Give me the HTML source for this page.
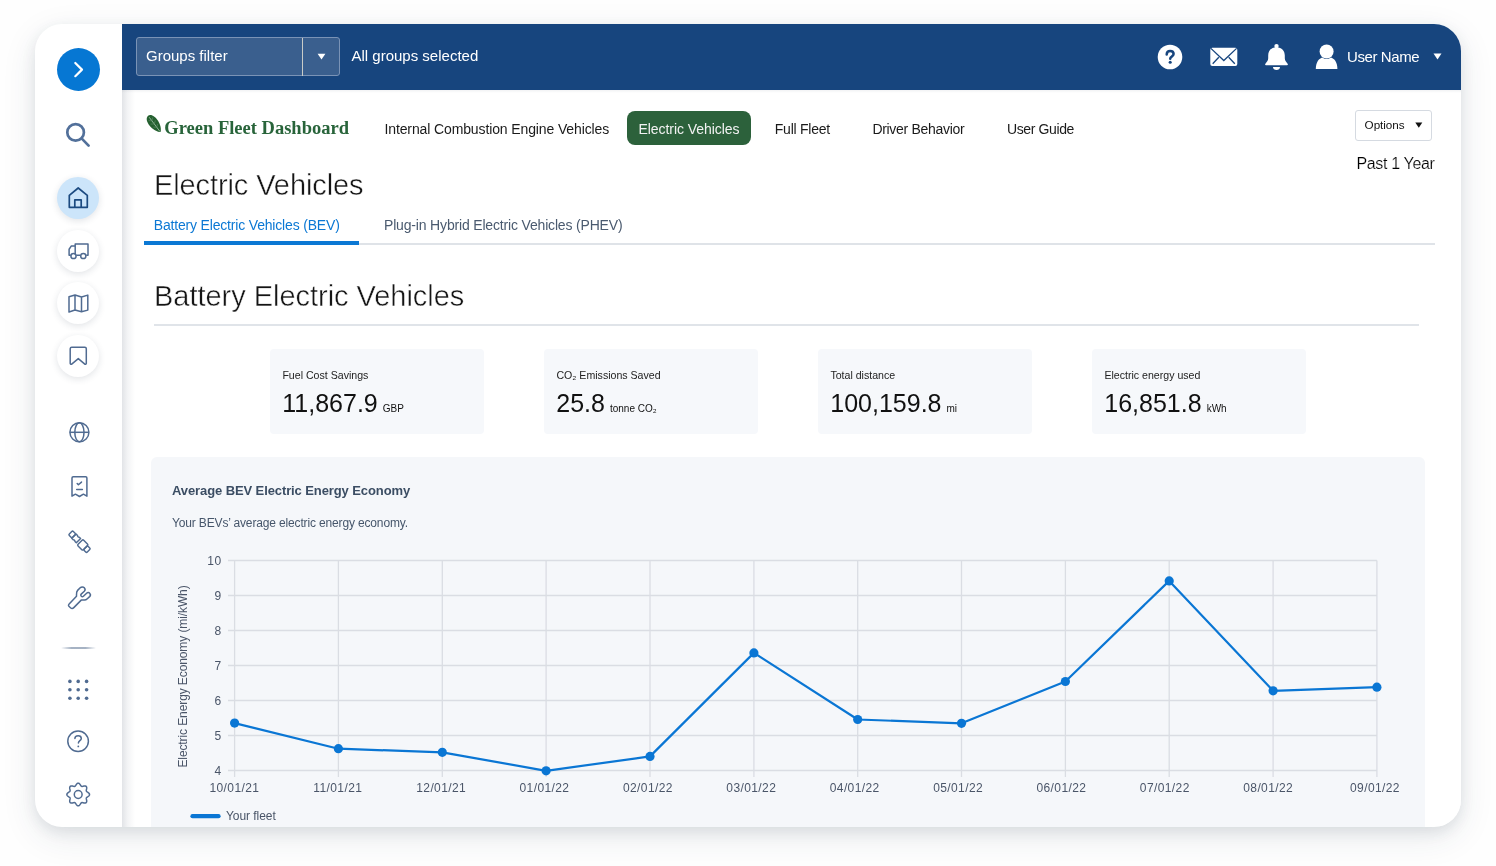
<!DOCTYPE html>
<html><head><meta charset="utf-8">
<style>
*{margin:0;padding:0;box-sizing:border-box}
html,body{width:1496px;height:866px;overflow:hidden;background:#fefefe;font-family:"Liberation Sans",sans-serif}
.a{position:absolute}
#card{position:absolute;left:35px;top:24px;width:1426px;height:803px;border-radius:27px;background:#fff;box-shadow:0 5px 14px rgba(40,55,75,.10),0 10px 34px rgba(40,55,75,.10);overflow:hidden}
#in{position:absolute;left:-35px;top:-24px;width:1496px;height:866px;will-change:transform}
.t{position:absolute;white-space:nowrap;line-height:1}
.sc{position:absolute;left:57px;width:42px;height:42px;border-radius:50%;background:#fff;box-shadow:0 2px 7px rgba(30,45,70,.13)}
svg{position:absolute;left:0;top:0;overflow:visible}
.kpi{position:absolute;top:349px;width:214px;height:85px;border-radius:4px;background:#f6f8fb}
.kl{position:absolute;left:12.4px;top:21px;font-size:10.6px;color:#222;white-space:nowrap;line-height:1}
.kv{position:absolute;left:12.3px;top:41.6px;font-size:25px;color:#111;white-space:nowrap;line-height:1}
.ku{font-size:10px;margin-left:5px}
.lt{-webkit-text-stroke:0.45px #fff}
.lt2{-webkit-text-stroke:0.2px #fff}
.nav{position:absolute;top:121.5px;font-size:14px;color:#1a1a1a;white-space:nowrap;line-height:1}
</style></head><body>
<div id="card"><div id="in">
  <!-- main area -->
  <div class="a" style="left:122px;top:24px;width:1339px;height:802px;background:#fff"></div>
  <div class="a" style="left:122px;top:90px;width:13px;height:737px;background:linear-gradient(90deg,rgba(30,45,70,.13),rgba(30,45,70,.05) 45%,rgba(30,45,70,0))"></div>
  <div class="a" style="left:122px;top:90px;width:1339px;height:3px;background:linear-gradient(180deg,rgba(30,45,70,.06),rgba(30,45,70,0))"></div>
  <!-- header -->
  <div class="a" style="left:122px;top:24px;width:1339px;height:66px;background:#17457e"></div>
  <div class="a" style="left:136px;top:37px;width:204px;height:39px;border:1px solid #7a93b6;border-radius:3px;background:#3a5f8e"></div>
  <div class="a" style="left:302px;top:37.5px;width:1.4px;height:38px;background:#c9ccc8"></div>
  <div class="t" style="left:146px;top:48.3px;font-size:15px;color:#fff">Groups filter</div>
  <div class="t" style="left:351.5px;top:48.3px;font-size:15px;color:#fff">All groups selected</div>
  <div class="t" style="left:1347px;top:48.9px;font-size:15px;letter-spacing:-0.4px;color:#fff">User Name</div>

  <!-- sidebar buttons -->
  <div class="a" style="left:56.5px;top:48px;width:43px;height:43px;border-radius:50%;background:#0677d3"></div>
  <div class="sc" style="top:177px;background:#cce5fa"></div>
  <div class="sc" style="top:230px"></div>
  <div class="sc" style="top:282px"></div>
  <div class="sc" style="top:335px"></div>

  <svg width="1496" height="866">
    <!-- header icons -->
    <path d="M317.6 53.8h7.8l-3.9 5.6z" fill="#fff"/>
    <path d="M1433.5 53.5h8l-4 6z" fill="#fff"/>
    <circle cx="1170" cy="57" r="12.3" fill="#fff"/>
    <path d="M1166.7 54.4C1166.7 52.3 1168.1 50.9 1170.1 50.9C1172.2 50.9 1173.6 52.2 1173.6 54C1173.6 56.3 1170.2 56.5 1170.2 58.7" stroke="#17457e" stroke-width="2.5" fill="none" stroke-linecap="round"/><circle cx="1170.2" cy="62.3" r="1.55" fill="#17457e"/>
    <rect x="1210.3" y="47.8" width="27" height="18.3" rx="2" fill="#fff"/>
    <path d="M1210.9 48.4L1223.8 60.5L1236.6 48.4M1212.7 63.8L1218.8 57.3M1234.8 63.8L1228.7 57.3" stroke="#17457e" stroke-width="1.3" fill="none"/>
    <path d="M1276.5 47.2C1271 47.2 1268.2 51 1268.2 55.5V58.3C1268.2 60.7 1266.6 62.3 1265.4 63.7C1264.8 64.4 1265.1 65.3 1266 65.3H1287C1287.9 65.3 1288.2 64.4 1287.6 63.7C1286.4 62.3 1284.8 60.7 1284.8 58.3V55.5C1284.8 51 1282 47.2 1276.5 47.2Z" fill="#fff"/><circle cx="1276.5" cy="46.1" r="2.2" fill="#fff"/>
    <path d="M1273 66.9H1280C1280 68.7 1278.5 70 1276.5 70C1274.5 70 1273 68.7 1273 66.9Z" fill="#fff"/>
    <circle cx="1326.6" cy="51.5" r="7" fill="#fff"/>
    <path d="M1315.8 68.9c0-7 3.5-10.6 6.5-11.4c1.4 1 2.8 1.5 4.3 1.5s2.9-.5 4.3-1.5c3 .8 6.5 4.4 6.5 11.4z" fill="#fff"/>

    <!-- options triangle -->
    <path d="M1415.3 122.6h7l-3.5 5.2z" fill="#111"/>

    <!-- leaf logo -->
    <g transform="translate(154.3 124) rotate(-37)">
      <path d="M0 -10.4C6.6 -9.6 6.4 5 0.2 10.2C-6.2 5 -6.6 -9.6 0 -10.4Z" fill="#24602f"/>
      <path d="M0 -8.5V9.5" stroke="#9dbfa3" stroke-width=".8" fill="none"/>
      <path d="M0 -4L-2.6 -6.2M0 0L-3 -2.2M0 4L-2.6 2M0 -4L2.6 -6.2M0 0L3 -2.2M0 4L2.6 2" stroke="#5d8a66" stroke-width=".6" fill="none"/>
    </g>

    <!-- sidebar icons -->
    <g fill="none" stroke="#0677d3" stroke-width="0"></g>
    <path d="M75.3 63L82 69.6L75.3 76.2" stroke="#fff" stroke-width="2.2" stroke-linecap="round" stroke-linejoin="round" fill="none"/>
    <g fill="none" stroke="#52709a" stroke-width="2.7" stroke-linecap="round">
      <circle cx="75.6" cy="132.4" r="8.3"/>
      <path d="M81.8 138.6L88.6 145.6"/>
    </g>
    <g fill="none" stroke="#1b4a80" stroke-width="1.7" stroke-linejoin="round">
      <path d="M69.3 207.3V195.4L78.2 188L87.3 195.4V207.3Z"/>
      <path d="M74.8 207.3V199.8H81.2V207.3"/>
    </g>
    <g fill="none" stroke="#506b91" stroke-width="1.5" stroke-linejoin="round">
      <path d="M75.2 254.5V244H88V255.3H86.2M80.5 255.3H76.3M70.8 255.3H69.1V249.2L71.4 245.9H75.2"/>
      <circle cx="73.5" cy="256" r="2.6"/>
      <circle cx="83.3" cy="256" r="2.6"/>
      <path d="M69 296.8L75 295L81.5 297L87.8 295.1V310.1L81.5 311.8L75 310L69 312Z M75 295V310 M81.5 297V311.8"/>
      <path d="M70.2 348.8a1.5 1.5 0 0 1 1.5 -1.5H84.8a1.5 1.5 0 0 1 1.5 1.5V363.5a.9 .9 0 0 1 -1.5 .6L78.3 358.6L71.7 364.1a.9 .9 0 0 1 -1.5 -.6Z"/>
      <!-- globe -->
      <circle cx="79.4" cy="432.3" r="9.5"/>
      <ellipse cx="79.4" cy="432.3" rx="4.6" ry="9.5"/>
      <path d="M69.9 432.3H88.9"/>
      <!-- receipt -->
      <path d="M72 496.2V478a1.2 1.2 0 0 1 1.2 -1.2H85.7a1.2 1.2 0 0 1 1.2 1.2V496.2L83.4 494.2L79.5 496.5L75.4 494.2Z"/>
      <path d="M77.2 483.5L78.4 484.8L81.5 482.1M76.7 489.6H82.4" stroke-linecap="round"/>
      <!-- wrench -->
      <path d="M68.9 604.3L76.5 596.3C76.6 594.5 76 592 77.6 590.4L80.2 587.7C81.3 586.6 83.3 586.6 84.3 587.7C85.2 588.7 85.2 590.3 84.3 591.3L81.2 594.1C80.6 594.7 80.7 595.7 81.3 596.2C81.9 596.8 82.8 596.8 83.4 596.2L86.6 593.2C87.6 592.3 89 592.4 89.8 593.4C90.6 594.3 90.5 595.7 89.6 596.6L87.3 598.8C86.4 599.7 85.5 600.2 84.2 600.1H81.2L73.8 607.6C72.8 608.6 71.5 608.6 70.5 607.7L68.9 606.2C68.4 605.6 68.4 604.8 68.9 604.3Z"/>
      <!-- help -->
      <circle cx="78.1" cy="741.3" r="10.3"/>
      <path d="M74.9 738.6C74.9 736.8 76.3 735.7 78.1 735.7C79.9 735.7 81.3 736.8 81.3 738.4C81.3 740.6 78.4 740.8 78.4 743" stroke-linecap="round"/>
      <!-- gear -->
      <circle cx="78.2" cy="794.5" r="3.9"/>
      <path d="M78.20 783.15 L78.64 783.22 L79.07 783.42 L79.47 783.74 L79.84 784.14 L80.17 784.59 L80.47 785.05 L80.74 785.49 L81.01 785.86 L81.28 786.14 L81.59 786.32 L81.93 786.41 L82.33 786.40 L82.78 786.33 L83.28 786.22 L83.81 786.10 L84.36 786.02 L84.91 785.99 L85.42 786.05 L85.86 786.21 L86.23 786.47 L86.49 786.84 L86.65 787.28 L86.71 787.79 L86.68 788.34 L86.60 788.89 L86.48 789.42 L86.37 789.92 L86.30 790.37 L86.29 790.77 L86.38 791.11 L86.56 791.42 L86.84 791.69 L87.21 791.96 L87.65 792.23 L88.11 792.53 L88.56 792.86 L88.96 793.23 L89.28 793.63 L89.48 794.06 L89.55 794.50 L89.48 794.94 L89.28 795.37 L88.96 795.77 L88.56 796.14 L88.11 796.47 L87.65 796.77 L87.21 797.04 L86.84 797.31 L86.56 797.58 L86.38 797.89 L86.29 798.23 L86.30 798.63 L86.37 799.08 L86.48 799.58 L86.60 800.11 L86.68 800.66 L86.71 801.21 L86.65 801.72 L86.49 802.16 L86.23 802.53 L85.86 802.79 L85.42 802.95 L84.91 803.01 L84.36 802.98 L83.81 802.90 L83.28 802.78 L82.78 802.67 L82.33 802.60 L81.93 802.59 L81.59 802.68 L81.28 802.86 L81.01 803.14 L80.74 803.51 L80.47 803.95 L80.17 804.41 L79.84 804.86 L79.47 805.26 L79.07 805.58 L78.64 805.78 L78.20 805.85 L77.76 805.78 L77.33 805.58 L76.93 805.26 L76.56 804.86 L76.23 804.41 L75.93 803.95 L75.66 803.51 L75.39 803.14 L75.12 802.86 L74.81 802.68 L74.47 802.59 L74.07 802.60 L73.62 802.67 L73.12 802.78 L72.59 802.90 L72.04 802.98 L71.49 803.01 L70.98 802.95 L70.54 802.79 L70.17 802.53 L69.91 802.16 L69.75 801.72 L69.69 801.21 L69.72 800.66 L69.80 800.11 L69.92 799.58 L70.03 799.08 L70.10 798.63 L70.11 798.23 L70.02 797.89 L69.84 797.58 L69.56 797.31 L69.19 797.04 L68.75 796.77 L68.29 796.47 L67.84 796.14 L67.44 795.77 L67.12 795.37 L66.92 794.94 L66.85 794.50 L66.92 794.06 L67.12 793.63 L67.44 793.23 L67.84 792.86 L68.29 792.53 L68.75 792.23 L69.19 791.96 L69.56 791.69 L69.84 791.42 L70.02 791.11 L70.11 790.77 L70.10 790.37 L70.03 789.92 L69.92 789.42 L69.80 788.89 L69.72 788.34 L69.69 787.79 L69.75 787.28 L69.91 786.84 L70.17 786.47 L70.54 786.21 L70.98 786.05 L71.49 785.99 L72.04 786.02 L72.59 786.10 L73.12 786.22 L73.62 786.33 L74.07 786.40 L74.47 786.41 L74.81 786.32 L75.12 786.14 L75.39 785.86 L75.66 785.49 L75.93 785.05 L76.23 784.59 L76.56 784.14 L76.93 783.74 L77.33 783.42 L77.76 783.22 L78.20 783.15Z"/>
    </g>
    <g fill="#506b91">
      <circle cx="78.3" cy="746.4" r=".9"/>
      <circle cx="69.9" cy="681.4" r="1.8"/><circle cx="78.2" cy="681.4" r="1.8"/><circle cx="86.6" cy="681.4" r="1.8"/>
      <circle cx="69.9" cy="689.8" r="1.8"/><circle cx="78.2" cy="689.8" r="1.8"/><circle cx="86.6" cy="689.8" r="1.8"/>
      <circle cx="69.9" cy="698.3" r="1.8"/><circle cx="78.2" cy="698.3" r="1.8"/><circle cx="86.6" cy="698.3" r="1.8"/>
    </g>
    <!-- seatbelt icon -->
    <g transform="translate(79.8 542) rotate(-45) scale(.95)" fill="none" stroke="#506b91" stroke-width="1.55" stroke-linejoin="round">
      <rect x="-3" y="-13.8" width="6" height="5" rx="1.2"/>
      <path d="M-3.2 -8.8H3.2V-6.6C2.4 -6 2.4 -4.6 3.2 -4V-2H-3.2V-4C-2.4 -4.6 -2.4 -6 -3.2 -6.6Z"/>
      <rect x="-4.2" y=".4" width="8.4" height="8" rx="1.2"/>
      <rect x="-3" y="8.4" width="6" height="4.6" rx="1.2"/>
    </g>
    <!-- divider -->
    
  </svg>

  <div class="a" style="left:61px;top:647.4px;width:35px;height:1.6px;border-radius:1px;background:linear-gradient(90deg,rgba(150,165,185,0),rgba(150,165,185,.85) 30%,rgba(150,165,185,.85) 70%,rgba(150,165,185,0))"></div>
  <!-- nav -->
  <div class="t" style="left:164.3px;top:118.5px;font-family:'Liberation Serif',serif;font-weight:bold;font-size:18.5px;color:#28643a">Green Fleet Dashboard</div>
  <div class="nav" style="left:384.5px;letter-spacing:-0.12px">Internal Combustion Engine Vehicles</div>
  <div class="a" style="left:627px;top:111px;width:123.5px;height:34px;border-radius:8px;background:#2c613b"></div>
  <div class="nav" style="left:638.4px;color:#f2f2f2;letter-spacing:-0.05px">Electric Vehicles</div>
  <div class="nav" style="left:774.8px;letter-spacing:-0.25px">Full Fleet</div>
  <div class="nav" style="left:872.4px;letter-spacing:-0.3px">Driver Behavior</div>
  <div class="nav" style="left:1007px;letter-spacing:-0.38px">User Guide</div>

  <div class="a" style="left:1355px;top:109.5px;width:77px;height:31px;border:1px solid #d5dae1;border-radius:3px"></div>
  <div class="t" style="left:1364.6px;top:119.2px;font-size:11.7px;letter-spacing:-0.05px;color:#111">Options</div>
  <div class="t lt2" style="left:1356.5px;top:156.2px;font-size:16px;letter-spacing:-0.35px;color:#000">Past 1 Year</div>

  <div class="t lt" style="left:154px;top:170.5px;font-size:29px;letter-spacing:-0.1px;color:#151515">Electric Vehicles</div>
  <div class="t" style="left:153.8px;top:218.4px;font-size:14px;letter-spacing:-0.18px;color:#0b78d4">Battery Electric Vehicles (BEV)</div>
  <div class="t" style="left:384px;top:218.4px;font-size:14px;letter-spacing:-0.17px;color:#4a5a6f">Plug-in Hybrid Electric Vehicles (PHEV)</div>
  <div class="a" style="left:143.5px;top:243.4px;width:1291.5px;height:1.5px;background:#dfe3e8"></div>
  <div class="a" style="left:143.5px;top:241px;width:215.5px;height:3.6px;background:#0b78d4"></div>

  <div class="t lt" style="left:154px;top:282.3px;font-size:29px;letter-spacing:-0.03px;color:#151515">Battery Electric Vehicles</div>
  <div class="a" style="left:154px;top:324.3px;width:1265px;height:1.6px;background:#e0e4e9"></div>

  <!-- KPI -->
  <div class="kpi" style="left:270px"><div class="kl">Fuel Cost Savings</div><div class="kv">11,867.9<span class="ku">GBP</span></div></div>
  <div class="kpi" style="left:544px"><div class="kl">CO₂ Emissions Saved</div><div class="kv">25.8<span class="ku">tonne CO₂</span></div></div>
  <div class="kpi" style="left:818px"><div class="kl">Total distance</div><div class="kv">100,159.8<span class="ku">mi</span></div></div>
  <div class="kpi" style="left:1092px"><div class="kl">Electric energy used</div><div class="kv">16,851.8<span class="ku">kWh</span></div></div>

  <!-- chart card -->
  <div class="a" style="left:151px;top:457.4px;width:1274px;height:400px;border-radius:6px;background:#f5f7fa"></div>
  <div class="t" style="left:172px;top:484.1px;font-size:13px;font-weight:bold;letter-spacing:-0.1px;color:#3b4d63">Average BEV Electric Energy Economy</div>
  <div class="t" style="left:172px;top:516.6px;font-size:12px;letter-spacing:-0.15px;color:#46566b">Your BEVs’ average electric energy economy.</div>
  <svg width="1496" height="866">
    <g stroke="#dadde3" stroke-width="1.3" fill="none">
<path d="M228 560.5H1376.9" />
<path d="M228 595.5H1376.9" />
<path d="M228 630.5H1376.9" />
<path d="M228 665.5H1376.9" />
<path d="M228 700.5H1376.9" />
<path d="M228 735.5H1376.9" />
<path d="M228 770.5H1376.9" />
<path d="M234.6 560.5V777" />
<path d="M338.4 560.5V777" />
<path d="M442.3 560.5V777" />
<path d="M546.1 560.5V777" />
<path d="M650.0 560.5V777" />
<path d="M753.9 560.5V777" />
<path d="M857.7 560.5V777" />
<path d="M961.5 560.5V777" />
<path d="M1065.4 560.5V777" />
<path d="M1169.2 560.5V777" />
<path d="M1273.1 560.5V777" />
<path d="M1376.9 560.5V777" />
    </g>
    <g font-family="Liberation Sans" font-size="12" fill="#4a5568" letter-spacing="0.4">
<text x="221.5" y="564.7" text-anchor="end">10</text>
<text x="221.5" y="599.7" text-anchor="end">9</text>
<text x="221.5" y="634.7" text-anchor="end">8</text>
<text x="221.5" y="669.7" text-anchor="end">7</text>
<text x="221.5" y="704.7" text-anchor="end">6</text>
<text x="221.5" y="739.7" text-anchor="end">5</text>
<text x="221.5" y="774.7" text-anchor="end">4</text>
<text x="234.4" y="791.5" text-anchor="middle">10/01/21</text>
<text x="337.8" y="791.5" text-anchor="middle">11/01/21</text>
<text x="441.2" y="791.5" text-anchor="middle">12/01/21</text>
<text x="544.5" y="791.5" text-anchor="middle">01/01/22</text>
<text x="647.9" y="791.5" text-anchor="middle">02/01/22</text>
<text x="751.3" y="791.5" text-anchor="middle">03/01/22</text>
<text x="854.7" y="791.5" text-anchor="middle">04/01/22</text>
<text x="958.1" y="791.5" text-anchor="middle">05/01/22</text>
<text x="1061.4" y="791.5" text-anchor="middle">06/01/22</text>
<text x="1164.8" y="791.5" text-anchor="middle">07/01/22</text>
<text x="1268.2" y="791.5" text-anchor="middle">08/01/22</text>
<text x="1375.0" y="791.5" text-anchor="middle">09/01/22</text>
      <text x="226" y="819.5" letter-spacing="-0.05">Your fleet</text>
      <text transform="translate(186.9 676.5) rotate(-90)" text-anchor="middle" font-size="12" letter-spacing="-0.1">Electric Energy Economy (mi/kWh)</text>
    </g>
    <path d="M234.6 723.1 L338.4 748.7 L442.3 752.3 L546.1 770.8 L650.0 756.4 L753.9 652.9 L857.7 719.5 L961.5 723.3 L1065.4 681.5 L1169.2 580.9 L1273.1 690.8 L1376.9 687.2" fill="none" stroke="#0a76d4" stroke-width="2.2" stroke-linejoin="round"/>
    <g fill="#0a76d4">
<circle cx="234.6" cy="723.1" r="4.6"/>
<circle cx="338.4" cy="748.7" r="4.6"/>
<circle cx="442.3" cy="752.3" r="4.6"/>
<circle cx="546.1" cy="770.8" r="4.6"/>
<circle cx="650.0" cy="756.4" r="4.6"/>
<circle cx="753.9" cy="652.9" r="4.6"/>
<circle cx="857.7" cy="719.5" r="4.6"/>
<circle cx="961.5" cy="723.3" r="4.6"/>
<circle cx="1065.4" cy="681.5" r="4.6"/>
<circle cx="1169.2" cy="580.9" r="4.6"/>
<circle cx="1273.1" cy="690.8" r="4.6"/>
<circle cx="1376.9" cy="687.2" r="4.6"/>
    </g>
    <path d="M192.5 816.2H218.5" stroke="#0a76d4" stroke-width="4.3" stroke-linecap="round"/>
  </svg>
</div></div>
</body></html>
